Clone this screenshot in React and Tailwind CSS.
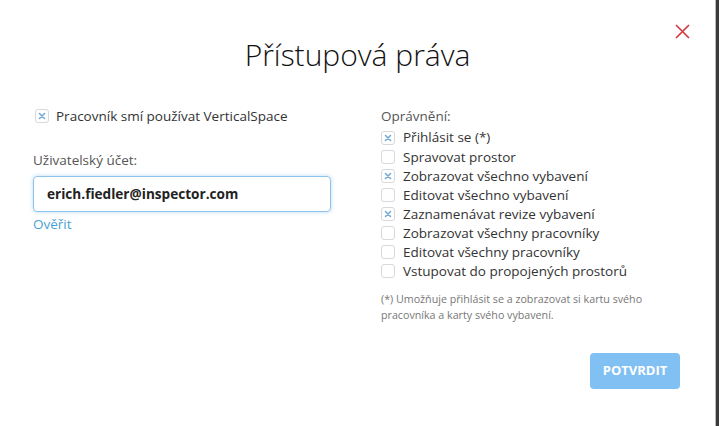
import React from "react";

const perms = [
  { label: "Přihlásit se (*)", checked: true },
  { label: "Spravovat prostor", checked: false },
  { label: "Zobrazovat všechno vybavení", checked: true },
  { label: "Editovat všechno vybavení", checked: false },
  { label: "Zaznamenávat revize vybavení", checked: true },
  { label: "Zobrazovat všechny pracovníky", checked: false },
  { label: "Editovat všechny pracovníky", checked: false },
  { label: "Vstupovat do propojených prostorů", checked: false },
];

const Check = ({ checked }) => (
  <span className="flex h-[14px] w-[14px] shrink-0 items-center justify-center rounded-[3px] border border-[#d6d9dd] bg-white">
    {checked && (
      <svg width="8" height="8" viewBox="0 0 8 8" fill="none" stroke="#72aad8" strokeWidth="1.6" strokeLinecap="round">
        <path d="M1.5 1.5l5 5M6.5 1.5l-5 5" />
      </svg>
    )}
  </span>
);

export default function App() {
  return (
    <div className="flex h-[426px] w-[719px] bg-[#3a3a3a] font-['Open_Sans',sans-serif] text-[#333]">
      <div className="relative flex h-full w-[716px] flex-col border-r border-[#bdbdbd] bg-white">
        <button className="absolute right-[25px] top-[24px]">
          <svg width="15" height="15" viewBox="0 0 15 15" fill="none" stroke="#d8343d" strokeWidth="1.6">
            <path d="M1 1l13 13M14 1l-13 13" />
          </svg>
        </button>

        <h1 className="mt-[34px] text-center text-[30px] font-light leading-[42px] text-[#111]">
          Přístupová práva
        </h1>

        <div className="mt-[31px] flex px-[33px]">
          <div className="w-[298px]">
            <label className="flex items-center gap-[7px] pl-[2px] text-[13.5px] leading-[18px] text-[#333]">
              <Check checked />
              Pracovník smí používat VerticalSpace
            </label>

            <div className="mt-[26px] text-[13.5px] leading-[18px] text-[#555]">Uživatelský účet:</div>
            <div className="mt-[7px] flex h-[36px] items-center rounded-[4px] border border-[#8ec3ec] px-[13px] shadow-[0_0_4px_rgba(102,175,233,0.45)]">
              <span className="text-[13.6px] font-bold text-[#222]">erich.fiedler@inspector.com</span>
            </div>
            <a className="mt-[3px] block text-[13.5px] leading-[18px] text-[#4b9fd5]">Ověřit</a>
          </div>

          <div className="ml-[50px] flex-1">
            <div className="text-[13.5px] leading-[18px] text-[#555]">Oprávnění:</div>
            <ul className="mt-[3px] flex flex-col">
              {perms.map((p) => (
                <li key={p.label} className="flex h-[19.1px] items-center gap-[8px] text-[13.5px] text-[#333]">
                  <Check checked={p.checked} />
                  {p.label}
                </li>
              ))}
            </ul>
            <p className="mt-[10px] w-[270px] text-[10.7px] leading-[16px] text-[#777]">
              (*) Umožňuje přihlásit se a zobrazovat si kartu svého pracovníka a karty svého vybavení.
            </p>
            <div className="mt-[30px] flex justify-end pr-[2px]">
              <button className="h-[36px] w-[90px] rounded-[4px] bg-[#80c0f3] text-[13px] font-bold text-white">
                POTVRDIT
              </button>
            </div>
          </div>
        </div>
      </div>
    </div>
  );
}
